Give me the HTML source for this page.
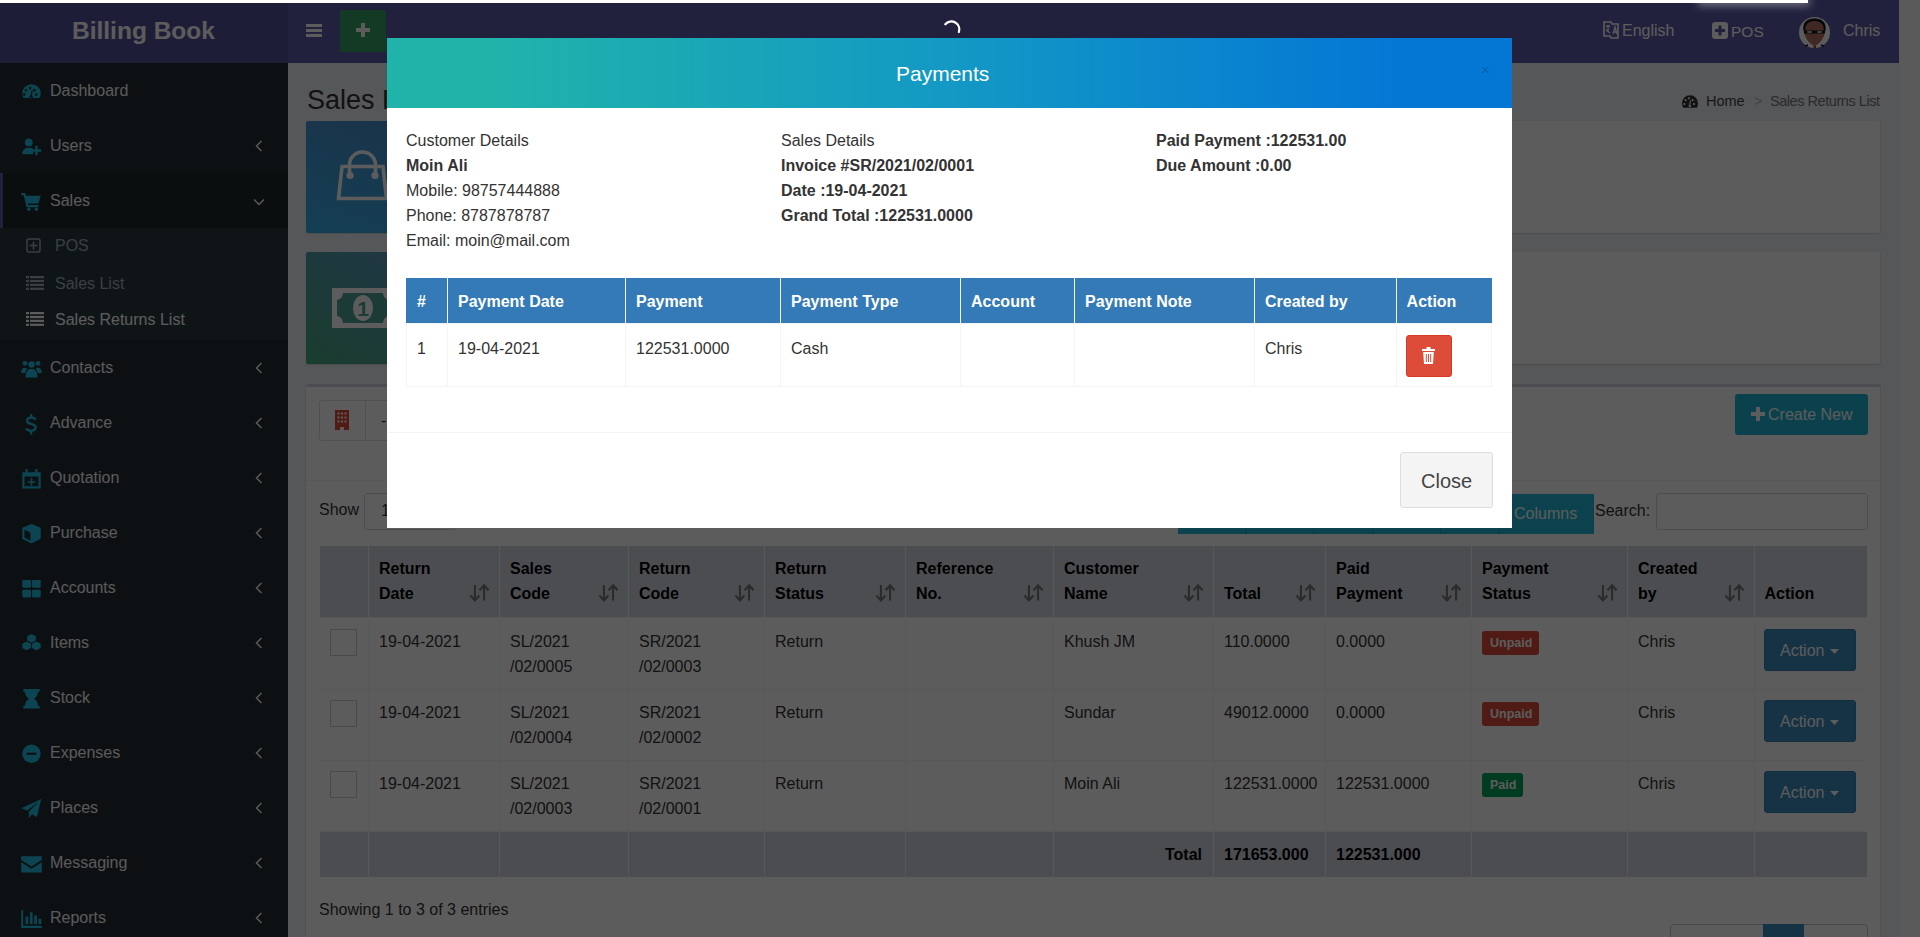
<!DOCTYPE html>
<html><head><meta charset="utf-8">
<style>
*{box-sizing:border-box;margin:0;padding:0}
html,body{width:1920px;height:937px;overflow:hidden;font-family:"Liberation Sans",sans-serif;background:#ecf0f5;position:relative}
.a{position:absolute}
.t{white-space:nowrap}
svg.a{overflow:visible}
</style></head><body>
<div class="a" style="left:288px;top:62px;width:1611px;height:875px;background:#ecf0f5;"></div>
<div class="a" style="left:0px;top:0px;width:288px;height:62.5px;background:#555299;"></div>
<div class="a" style="left:288px;top:0px;width:1611px;height:62.5px;background:#605ca8;"></div>
<span class="a t" style="left:72px;top:19.26px;font-size:24.5px;line-height:24.5px;color:#fff;font-weight:700;">Billing Book</span>
<div class="a" style="left:306px;top:24px;width:16px;height:3px;background:#fff;"></div>
<div class="a" style="left:306px;top:29px;width:16px;height:3px;background:#fff;"></div>
<div class="a" style="left:306px;top:34px;width:16px;height:3px;background:#fff;"></div>
<div class="a" style="left:340px;top:10px;width:46px;height:42px;background:#34a068;border-radius:3px"></div>
<div class="a" style="left:356px;top:27.5px;width:14px;height:4px;background:#fff;"></div>
<div class="a" style="left:361px;top:23px;width:4px;height:14px;background:#fff;"></div>
<svg class="a" style="left:1603px;top:21px;width:16px;height:19px;" viewBox="0 0 16 19"><path d="M1 1h7l1 2h6v14H8l-1-2H1z" fill="none" stroke="#fff" stroke-width="1.6"/><path d="M3 5h4M5 5v6M3 9l4 3" stroke="#fff" stroke-width="1.3" fill="none"/><path d="M10 13l2-7 2 7M10.7 11h2.6" stroke="#fff" stroke-width="1.3" fill="none"/></svg>
<span class="a t" style="left:1622px;top:23.46px;font-size:16px;line-height:16px;color:#fff;font-weight:400;">English</span>
<svg class="a" style="left:1712px;top:22px;width:16px;height:17px;" viewBox="0 0 16 17"><rect x="0" y="0" width="16" height="17" rx="3" fill="#fff"/><path d="M6.5 3.5h3v3.5H13v3h-3.5v3.5h-3V10H3V7h3.5z" fill="#605ca8"/></svg>
<span class="a t" style="left:1731px;top:23.88px;font-size:15.5px;line-height:15.5px;color:#fff;font-weight:400;">POS</span>
<svg class="a" style="left:1799px;top:17px;width:31px;height:31px;" viewBox="0 0 31 31"><circle cx="15.5" cy="15.5" r="15.5" fill="#fff"/><path d="M15.5 1.5c6.5 0 10.5 4 10.5 11 0 8-5 14.5-10.5 16.5C10 27 5 20.5 5 12.5c0-7 4-11 10.5-11z" fill="#b87068"/><path d="M4.5 14c-1.5-9 4-12.5 11-12.5S28 5 26.5 14l-1.8-.5c.3-6-3-9.5-9.2-9.5S6 7.5 6.3 13.5z" fill="#111"/><path d="M5 13.5h21v3H5z" fill="#111"/><rect x="8" y="14" width="5" height="2" rx="1" fill="#bbb"/><rect x="18" y="14" width="5" height="2" rx="1" fill="#bbb"/><path d="M9 28l-3 1M22 28l3 1" stroke="#111" stroke-width="1.5"/><rect x="14.5" y="28.5" width="2.5" height="2.5" fill="#c0392b"/></svg>
<span class="a t" style="left:1843px;top:23.46px;font-size:16px;line-height:16px;color:#fff;font-weight:400;">Chris</span>
<div class="a" style="left:0px;top:62.5px;width:288px;height:875px;background:#222d32;"></div>
<div class="a" style="left:0px;top:172.5px;width:288px;height:55px;background:#1e282c;"></div>
<div class="a" style="left:0px;top:172.5px;width:3px;height:55px;background:#605ca8;"></div>
<div class="a" style="left:0px;top:227.5px;width:288px;height:112px;background:#2c3b41;"></div>
<svg class="a" style="left:20.5px;top:81.5px;width:21px;height:19.5px;" viewBox="0 0 19 18"><g fill="#22c0e0"><path d="M9.5 2A8.5 8.5 0 0 0 1 10.5c0 1.6.4 3 1.2 4.3h14.6A8.4 8.4 0 0 0 18 10.5 8.5 8.5 0 0 0 9.5 2zM4 11.5a1.2 1.2 0 1 1 0-.1zm1.6-4a1.2 1.2 0 1 1 0-.1zm3.9-1.9a1.2 1.2 0 1 1 0-.1zM10.5 13a1.5 1.5 0 1 1-2-.6l1.2-5 .9.2-.6 5zm3-5.4a1.2 1.2 0 1 1 0-.1zm1.6 4a1.2 1.2 0 1 1 0-.1z"/></g></svg>
<span class="a t" style="left:50px;top:83.46px;font-size:16px;line-height:16px;color:#f8f8fa;font-weight:400;">Dashboard</span>
<svg class="a" style="left:20.5px;top:136.5px;width:21px;height:19.5px;" viewBox="0 0 19 18"><g fill="#22c0e0"><circle cx="7" cy="5" r="3.6"/><path d="M1 16c0-4 2-6 6-6 2 0 3 .5 4 1.2V16z"/><path d="M13 8h2.2v3.3h3.3v2.2h-3.3v3.3H13v-3.3H9.8v-2.2H13z"/></g></svg>
<span class="a t" style="left:50px;top:138.46px;font-size:16px;line-height:16px;color:#f8f8fa;font-weight:400;">Users</span>
<svg class="a" style="left:255px;top:140px;width:8px;height:12px;" viewBox="0 0 8 12"><path d="M6.5 1 1.5 6l5 5" fill="none" stroke="#f8f8fa" stroke-width="1.5"/></svg>
<svg class="a" style="left:20.5px;top:191.5px;width:21px;height:19.5px;" viewBox="0 0 19 18"><g fill="#22c0e0"><path d="M0 1h3.5l.8 2.5H18l-2 7H6l.5 1.5H16v2H5L2.3 3H0z"/><circle cx="7" cy="16" r="1.6"/><circle cx="14" cy="16" r="1.6"/></g></svg>
<span class="a t" style="left:50px;top:193.46px;font-size:16px;line-height:16px;color:#f8f8fa;font-weight:400;">Sales</span>
<svg class="a" style="left:253px;top:198px;width:12px;height:8px;" viewBox="0 0 12 8"><path d="M1 1.5l5 5 5-5" fill="none" stroke="#f8f8fa" stroke-width="1.5"/></svg>
<svg class="a" style="left:20.5px;top:358.5px;width:21px;height:19.5px;" viewBox="0 0 19 18"><g fill="#22c0e0"><circle cx="9.5" cy="5" r="3"/><circle cx="3.5" cy="4" r="2.2"/><circle cx="15.5" cy="4" r="2.2"/><path d="M4 17c0-5 2-8 5.5-8S15 12 15 17z"/><path d="M0 13c0-3 1-5 3.5-5 1 0 1.6.3 2 .7C4.5 10 4 11.5 3.8 13z"/><path d="M19 13c0-3-1-5-3.5-5-1 0-1.6.3-2 .7 1 1.3 1.5 2.8 1.7 4.3z"/></g></svg>
<span class="a t" style="left:50px;top:360.46px;font-size:16px;line-height:16px;color:#f8f8fa;font-weight:400;">Contacts</span>
<svg class="a" style="left:255px;top:362px;width:8px;height:12px;" viewBox="0 0 8 12"><path d="M6.5 1 1.5 6l5 5" fill="none" stroke="#f8f8fa" stroke-width="1.5"/></svg>
<svg class="a" style="left:20.5px;top:413.5px;width:21px;height:19.5px;" viewBox="0 0 19 18"><g fill="#22c0e0"><path d="M8.2 0h2v2.3c1.8.2 3.3 1 4 2.2l-1.8 1.2c-.6-.9-1.8-1.4-3.1-1.4-1.7 0-2.7.8-2.7 1.8 0 1.2 1 1.6 3.2 2.2 2.6.7 4.6 1.6 4.6 4.2 0 2.1-1.7 3.5-4.2 3.8V19h-2v-2.5c-2-.2-3.7-1.2-4.5-2.6l1.8-1.2c.7 1.1 2 1.7 3.6 1.7 1.8 0 3-.7 3-1.9 0-1.2-1-1.7-3.3-2.3C6.2 9.6 4.4 8.7 4.4 6.2c0-2 1.5-3.5 3.8-3.8z"/></g></svg>
<span class="a t" style="left:50px;top:415.46px;font-size:16px;line-height:16px;color:#f8f8fa;font-weight:400;">Advance</span>
<svg class="a" style="left:255px;top:417px;width:8px;height:12px;" viewBox="0 0 8 12"><path d="M6.5 1 1.5 6l5 5" fill="none" stroke="#f8f8fa" stroke-width="1.5"/></svg>
<svg class="a" style="left:20.5px;top:468.5px;width:21px;height:19.5px;" viewBox="0 0 19 18"><g fill="#22c0e0"><path d="M1 3h17v15H1zM3 7v9h13V7z" fill-rule="evenodd"/><rect x="4" y="0" width="2" height="5"/><rect x="13" y="0" width="2" height="5"/><path d="M8.7 8.5h1.6v2.7H13v1.6h-2.7v2.7H8.7v-2.7H6v-1.6h2.7z"/></g></svg>
<span class="a t" style="left:50px;top:470.46px;font-size:16px;line-height:16px;color:#f8f8fa;font-weight:400;">Quotation</span>
<svg class="a" style="left:255px;top:472px;width:8px;height:12px;" viewBox="0 0 8 12"><path d="M6.5 1 1.5 6l5 5" fill="none" stroke="#f8f8fa" stroke-width="1.5"/></svg>
<svg class="a" style="left:20.5px;top:523.5px;width:21px;height:19.5px;" viewBox="0 0 19 18"><g fill="#22c0e0"><path d="M9.5 0 18 3.5v10L9.5 18 1 13.5v-10zM3 5v7.5l5.5 3V8z"/></g></svg>
<span class="a t" style="left:50px;top:525.46px;font-size:16px;line-height:16px;color:#f8f8fa;font-weight:400;">Purchase</span>
<svg class="a" style="left:255px;top:527px;width:8px;height:12px;" viewBox="0 0 8 12"><path d="M6.5 1 1.5 6l5 5" fill="none" stroke="#f8f8fa" stroke-width="1.5"/></svg>
<svg class="a" style="left:20.5px;top:578.5px;width:21px;height:19.5px;" viewBox="0 0 19 18"><g fill="#22c0e0"><rect x="1" y="1" width="8" height="7" rx="1"/><rect x="10" y="1" width="8" height="7" rx="1"/><rect x="1" y="10" width="8" height="7" rx="1"/><rect x="10" y="10" width="8" height="7" rx="1"/></g></svg>
<span class="a t" style="left:50px;top:580.46px;font-size:16px;line-height:16px;color:#f8f8fa;font-weight:400;">Accounts</span>
<svg class="a" style="left:255px;top:582px;width:8px;height:12px;" viewBox="0 0 8 12"><path d="M6.5 1 1.5 6l5 5" fill="none" stroke="#f8f8fa" stroke-width="1.5"/></svg>
<svg class="a" style="left:20.5px;top:633.5px;width:21px;height:19.5px;" viewBox="0 0 19 18"><g fill="#22c0e0"><path d="M9.5 0l4 2v4l-4 2-4-2V2z"/><path d="M5 7l4 2v4l-4 2-4-2V9z"/><path d="M14 7l4 2v4l-4 2-4-2V9z"/></g></svg>
<span class="a t" style="left:50px;top:635.46px;font-size:16px;line-height:16px;color:#f8f8fa;font-weight:400;">Items</span>
<svg class="a" style="left:255px;top:637px;width:8px;height:12px;" viewBox="0 0 8 12"><path d="M6.5 1 1.5 6l5 5" fill="none" stroke="#f8f8fa" stroke-width="1.5"/></svg>
<svg class="a" style="left:20.5px;top:688.5px;width:21px;height:19.5px;" viewBox="0 0 19 18"><g fill="#22c0e0"><path d="M2 0h15v2.5h-1.5c0 3.5-2 5.5-3.8 6.5 1.8 1 3.8 3 3.8 6.5H17V18H2v-2.5h1.5c0-3.5 2-5.5 3.8-6.5-1.8-1-3.8-3-3.8-6.5H2z"/></g></svg>
<span class="a t" style="left:50px;top:690.46px;font-size:16px;line-height:16px;color:#f8f8fa;font-weight:400;">Stock</span>
<svg class="a" style="left:255px;top:692px;width:8px;height:12px;" viewBox="0 0 8 12"><path d="M6.5 1 1.5 6l5 5" fill="none" stroke="#f8f8fa" stroke-width="1.5"/></svg>
<svg class="a" style="left:20.5px;top:743.5px;width:21px;height:19.5px;" viewBox="0 0 19 18"><g fill="#22c0e0"><circle cx="9.5" cy="9" r="8.5"/><rect x="5" y="8" width="9" height="2" fill="#222d32"/></g></svg>
<span class="a t" style="left:50px;top:745.46px;font-size:16px;line-height:16px;color:#f8f8fa;font-weight:400;">Expenses</span>
<svg class="a" style="left:255px;top:747px;width:8px;height:12px;" viewBox="0 0 8 12"><path d="M6.5 1 1.5 6l5 5" fill="none" stroke="#f8f8fa" stroke-width="1.5"/></svg>
<svg class="a" style="left:20.5px;top:798.5px;width:21px;height:19.5px;" viewBox="0 0 19 18"><g fill="#22c0e0"><path d="M18.5 0 0 8.5l5.5 2.2L16 2.5 7 11.8v6L10 14l4.5 2.5z"/></g></svg>
<span class="a t" style="left:50px;top:800.46px;font-size:16px;line-height:16px;color:#f8f8fa;font-weight:400;">Places</span>
<svg class="a" style="left:255px;top:802px;width:8px;height:12px;" viewBox="0 0 8 12"><path d="M6.5 1 1.5 6l5 5" fill="none" stroke="#f8f8fa" stroke-width="1.5"/></svg>
<svg class="a" style="left:20.5px;top:853.5px;width:21px;height:19.5px;" viewBox="0 0 19 18"><g fill="#22c0e0"><path d="M0 2h19v3.5l-9.5 6L0 5.5z"/><path d="M0 7.5l9.5 6 9.5-6V17H0z"/></g></svg>
<span class="a t" style="left:50px;top:855.46px;font-size:16px;line-height:16px;color:#f8f8fa;font-weight:400;">Messaging</span>
<svg class="a" style="left:255px;top:857px;width:8px;height:12px;" viewBox="0 0 8 12"><path d="M6.5 1 1.5 6l5 5" fill="none" stroke="#f8f8fa" stroke-width="1.5"/></svg>
<svg class="a" style="left:20.5px;top:908.5px;width:21px;height:19.5px;" viewBox="0 0 19 18"><g fill="#22c0e0"><path d="M0 1h1.8v14.5H19v2H0z"/><rect x="4" y="7" width="2.5" height="7"/><rect x="8" y="3" width="2.5" height="11"/><rect x="12" y="6" width="2.5" height="8"/><rect x="16" y="9" width="2.5" height="5"/></g></svg>
<span class="a t" style="left:50px;top:910.46px;font-size:16px;line-height:16px;color:#f8f8fa;font-weight:400;">Reports</span>
<svg class="a" style="left:255px;top:912px;width:8px;height:12px;" viewBox="0 0 8 12"><path d="M6.5 1 1.5 6l5 5" fill="none" stroke="#f8f8fa" stroke-width="1.5"/></svg>
<svg class="a" style="left:26px;top:238px;width:15px;height:15px;" viewBox="0 0 15 15"><rect x="1" y="1" width="13" height="13" rx="2" fill="none" stroke="#9fb0b8" stroke-width="1.5"/><path d="M7.5 3.5v8M3.5 7.5h8" stroke="#9fb0b8" stroke-width="1.5"/></svg>
<span class="a t" style="left:55px;top:238.46px;font-size:16px;line-height:16px;color:#9fb0b8;font-weight:400;">POS</span>
<svg class="a" style="left:26px;top:276px;width:18px;height:14px;" viewBox="0 0 18 14"><rect x="0" y="0" width="3" height="2.2" fill="#9fb0b8"/><rect x="4" y="0" width="14" height="2.2" fill="#9fb0b8"/><rect x="0" y="3.9" width="3" height="2.2" fill="#9fb0b8"/><rect x="4" y="3.9" width="14" height="2.2" fill="#9fb0b8"/><rect x="0" y="7.8" width="3" height="2.2" fill="#9fb0b8"/><rect x="4" y="7.8" width="14" height="2.2" fill="#9fb0b8"/><rect x="0" y="11.7" width="3" height="2.2" fill="#9fb0b8"/><rect x="4" y="11.7" width="14" height="2.2" fill="#9fb0b8"/></svg>
<span class="a t" style="left:55px;top:276.46px;font-size:16px;line-height:16px;color:#9fb0b8;font-weight:400;">Sales List</span>
<svg class="a" style="left:26px;top:312px;width:18px;height:14px;" viewBox="0 0 18 14"><rect x="0" y="0" width="3" height="2.2" fill="#fff"/><rect x="4" y="0" width="14" height="2.2" fill="#fff"/><rect x="0" y="3.9" width="3" height="2.2" fill="#fff"/><rect x="4" y="3.9" width="14" height="2.2" fill="#fff"/><rect x="0" y="7.8" width="3" height="2.2" fill="#fff"/><rect x="4" y="7.8" width="14" height="2.2" fill="#fff"/><rect x="0" y="11.7" width="3" height="2.2" fill="#fff"/><rect x="4" y="11.7" width="14" height="2.2" fill="#fff"/></svg>
<span class="a t" style="left:55px;top:312.46px;font-size:16px;line-height:16px;color:#fff;font-weight:400;">Sales Returns List</span>
<span class="a t" style="left:307px;top:86.74px;font-size:27px;line-height:27px;color:#333;font-weight:400;">Sales Returns List</span>
<svg class="a" style="left:1682px;top:95px;width:16px;height:13px;" viewBox="0 0 19 15"><path fill="#333" d="M9.5 0A9.5 9.5 0 0 0 0 9.5c0 1.9.5 3.7 1.4 5.3h16.2A9.4 9.4 0 0 0 19 9.5 9.5 9.5 0 0 0 9.5 0zM4 10.5a1.3 1.3 0 1 1 0-.1zm1.6-4.6a1.3 1.3 0 1 1 0-.1zm3.9-2.2a1.3 1.3 0 1 1 0-.1zM10.7 12a1.6 1.6 0 1 1-2.2-.6l1.2-5.6 1 .2-.7 5.5zm3.3-6.1a1.3 1.3 0 1 1 0-.1zm1.6 4.6a1.3 1.3 0 1 1 0-.1z"/></svg>
<span class="a t" style="left:1706px;top:93.73px;font-size:14.5px;line-height:14.5px;color:#444;font-weight:400;">Home</span>
<span class="a t" style="left:1754px;top:93.73px;font-size:14.5px;line-height:14.5px;color:#bbb;font-weight:400;">&gt;</span>
<span class="a t" style="left:1770px;top:93.73px;font-size:14.5px;line-height:14.5px;color:#777;font-weight:400;letter-spacing:-0.45px">Sales Returns List</span>
<div class="a" style="left:306px;top:121px;width:1574px;height:112px;background:#fff;border-radius:2px;box-shadow:0 1px 1px rgba(0,0,0,.12),1px 0 0 rgba(0,0,0,.05)"></div>
<div class="a" style="left:306px;top:121px;width:112.5px;height:112px;background:linear-gradient(20deg,#38aee6,#4a8ccc);border-radius:2px 0 0 2px"></div>
<svg class="a" style="left:336px;top:150px;width:53px;height:52px;" viewBox="0 0 53 52"><path d="M13.5 25V15A13 13 0 0 1 39.5 15V25" fill="none" stroke="#fff" stroke-width="3.6"/><circle cx="14" cy="25.5" r="3.6" fill="#fff"/><circle cx="39" cy="25.5" r="3.6" fill="#fff"/><path d="M6 16.5H47L50.5 48.5H2.5Z" fill="none" stroke="#fff" stroke-width="3.6" stroke-linejoin="miter"/></svg>
<div class="a" style="left:306px;top:252px;width:1574px;height:112px;background:#fff;border-radius:2px;box-shadow:0 1px 1px rgba(0,0,0,.12),1px 0 0 rgba(0,0,0,.05)"></div>
<div class="a" style="left:306px;top:252px;width:112.5px;height:112px;background:linear-gradient(30deg,#4aa882,#50a0a0 50%,#5a98c0);border-radius:2px 0 0 2px"></div>
<svg class="a" style="left:332px;top:288px;width:62px;height:40px;" viewBox="0 0 62 40"><path d="M0 0h62v40H0z" fill="#fff"/><path d="M11 5h40a7 7 0 0 0 6 7v16a7 7 0 0 0-6 7H11a7 7 0 0 0-6-7V12a7 7 0 0 0 6-7z" fill="#4ea39a"/><ellipse cx="31" cy="20" rx="10" ry="13" fill="#fff"/><text x="31" y="28" font-family="Liberation Sans" font-weight="bold" font-size="21" fill="#4ea39a" text-anchor="middle">1</text></svg>
<div class="a" style="left:306px;top:384px;width:1574px;height:560px;background:#fff;border-top:3px solid #d2d6de;border-radius:3px;box-shadow:1px 0 0 rgba(0,0,0,.06),-1px 0 0 rgba(0,0,0,.06)"></div>
<div class="a" style="left:306px;top:480px;width:1574px;height:1px;background:#f4f4f4;"></div>
<div class="a" style="left:319px;top:400px;width:47px;height:41px;background:#fff;border:1px solid #ddd;border-radius:3px 0 0 3px"></div>
<svg class="a" style="left:335px;top:410px;width:14px;height:20px;" viewBox="0 0 14 20"><path d="M0 0h14v20H9v-3H5v3H0z" fill="#dd4b39"/><rect x="2.5" y="2.5" width="2" height="2" fill="#fff"/><rect x="2.5" y="6.5" width="2" height="2" fill="#fff"/><rect x="2.5" y="10.5" width="2" height="2" fill="#fff"/><rect x="6" y="2.5" width="2" height="2" fill="#fff"/><rect x="6" y="6.5" width="2" height="2" fill="#fff"/><rect x="6" y="10.5" width="2" height="2" fill="#fff"/><rect x="9.5" y="2.5" width="2" height="2" fill="#fff"/><rect x="9.5" y="6.5" width="2" height="2" fill="#fff"/><rect x="9.5" y="10.5" width="2" height="2" fill="#fff"/></svg>
<div class="a" style="left:365px;top:400px;width:60px;height:41px;background:#fff;border:1px solid #ddd;border-radius:0 3px 3px 0"></div>
<span class="a t" style="left:381px;top:413.46px;font-size:16px;line-height:16px;color:#333;font-weight:400;">-</span>
<div class="a" style="left:1735px;top:394px;width:133px;height:41px;background:#1cb5d3;border-radius:3px"></div>
<svg class="a" style="left:1751px;top:407px;width:14px;height:14px;" viewBox="0 0 14 14"><path d="M5 0h4v5h5v4H9v5H5V9H0V5h5z" fill="#fff"/></svg>
<span class="a t" style="left:1768px;top:407.46px;font-size:16px;line-height:16px;color:#fff;font-weight:400;">Create New</span>
<span class="a t" style="left:319px;top:502.06px;font-size:16px;line-height:16px;color:#333;font-weight:400;">Show</span>
<div class="a" style="left:363.5px;top:493px;width:92px;height:37px;background:#fff;border:1px solid #d2d6de;border-radius:3px"></div>
<span class="a t" style="left:381px;top:503.46px;font-size:16px;line-height:16px;color:#333;font-weight:400;">10</span>
<div class="a" style="left:1177.5px;top:494px;width:416px;height:40px;background:#1fb8d6;"></div>
<div class="a" style="left:1245px;top:494px;width:1px;height:40px;background:#1aa0bb;"></div>
<div class="a" style="left:1312.5px;top:494px;width:1px;height:40px;background:#1aa0bb;"></div>
<div class="a" style="left:1372px;top:494px;width:1px;height:40px;background:#1aa0bb;"></div>
<div class="a" style="left:1439.6px;top:494px;width:1px;height:40px;background:#1aa0bb;"></div>
<div class="a" style="left:1498.75px;top:494px;width:1px;height:40px;background:#1aa0bb;"></div>
<span class="a t" style="left:1514px;top:506.46px;font-size:16px;line-height:16px;color:#fff;font-weight:400;">Columns</span>
<span class="a t" style="left:1595px;top:502.96px;font-size:16px;line-height:16px;color:#333;font-weight:400;">Search:</span>
<div class="a" style="left:1656px;top:493px;width:211.5px;height:37px;background:#fff;border:1px solid #d2d6de;border-radius:3px"></div>
<div class="a" style="left:320px;top:545.5px;width:1547px;height:71.5px;background:#d2d6de;"></div>
<div class="a" style="left:320px;top:831px;width:1547px;height:46px;background:#d2d6de;"></div>
<div class="a" style="left:320px;top:617px;width:1547px;height:1px;background:#f4f4f4;"></div>
<div class="a" style="left:320px;top:689px;width:1547px;height:1px;background:#f4f4f4;"></div>
<div class="a" style="left:320px;top:760px;width:1547px;height:1px;background:#f4f4f4;"></div>
<div class="a" style="left:320px;top:831px;width:1547px;height:1px;background:#f4f4f4;"></div>
<div class="a" style="left:368px;top:545.5px;width:1px;height:331.5px;background:#f4f4f4;"></div>
<div class="a" style="left:499px;top:545.5px;width:1px;height:331.5px;background:#f4f4f4;"></div>
<div class="a" style="left:628px;top:545.5px;width:1px;height:331.5px;background:#f4f4f4;"></div>
<div class="a" style="left:764px;top:545.5px;width:1px;height:331.5px;background:#f4f4f4;"></div>
<div class="a" style="left:905px;top:545.5px;width:1px;height:331.5px;background:#f4f4f4;"></div>
<div class="a" style="left:1053px;top:545.5px;width:1px;height:331.5px;background:#f4f4f4;"></div>
<div class="a" style="left:1213px;top:545.5px;width:1px;height:331.5px;background:#f4f4f4;"></div>
<div class="a" style="left:1325px;top:545.5px;width:1px;height:331.5px;background:#f4f4f4;"></div>
<div class="a" style="left:1471px;top:545.5px;width:1px;height:331.5px;background:#f4f4f4;"></div>
<div class="a" style="left:1627px;top:545.5px;width:1px;height:331.5px;background:#f4f4f4;"></div>
<div class="a" style="left:1753.5px;top:545.5px;width:1px;height:331.5px;background:#f4f4f4;"></div>
<span class="a t" style="left:379px;top:561.46px;font-size:16px;line-height:16px;color:#000;font-weight:700;">Return</span>
<span class="a t" style="left:379px;top:586.46px;font-size:16px;line-height:16px;color:#000;font-weight:700;">Date</span>
<svg class="a" style="left:470px;top:584px;width:19px;height:18px;opacity:.75" viewBox="0 0 13.5 11.5"><path d="M3.5 0v10.5M0.3 7.5l3.2 3.5 3.2-3.5M10 11V0.5M6.8 3.8L10 .3l3.2 3.5" fill="none" stroke="#5a5a5a" stroke-width="1.5"/></svg>
<span class="a t" style="left:510px;top:561.46px;font-size:16px;line-height:16px;color:#000;font-weight:700;">Sales</span>
<span class="a t" style="left:510px;top:586.46px;font-size:16px;line-height:16px;color:#000;font-weight:700;">Code</span>
<svg class="a" style="left:599px;top:584px;width:19px;height:18px;opacity:.75" viewBox="0 0 13.5 11.5"><path d="M3.5 0v10.5M0.3 7.5l3.2 3.5 3.2-3.5M10 11V0.5M6.8 3.8L10 .3l3.2 3.5" fill="none" stroke="#5a5a5a" stroke-width="1.5"/></svg>
<span class="a t" style="left:639px;top:561.46px;font-size:16px;line-height:16px;color:#000;font-weight:700;">Return</span>
<span class="a t" style="left:639px;top:586.46px;font-size:16px;line-height:16px;color:#000;font-weight:700;">Code</span>
<svg class="a" style="left:735px;top:584px;width:19px;height:18px;opacity:.75" viewBox="0 0 13.5 11.5"><path d="M3.5 0v10.5M0.3 7.5l3.2 3.5 3.2-3.5M10 11V0.5M6.8 3.8L10 .3l3.2 3.5" fill="none" stroke="#5a5a5a" stroke-width="1.5"/></svg>
<span class="a t" style="left:775px;top:561.46px;font-size:16px;line-height:16px;color:#000;font-weight:700;">Return</span>
<span class="a t" style="left:775px;top:586.46px;font-size:16px;line-height:16px;color:#000;font-weight:700;">Status</span>
<svg class="a" style="left:876px;top:584px;width:19px;height:18px;opacity:.75" viewBox="0 0 13.5 11.5"><path d="M3.5 0v10.5M0.3 7.5l3.2 3.5 3.2-3.5M10 11V0.5M6.8 3.8L10 .3l3.2 3.5" fill="none" stroke="#5a5a5a" stroke-width="1.5"/></svg>
<span class="a t" style="left:916px;top:561.46px;font-size:16px;line-height:16px;color:#000;font-weight:700;">Reference</span>
<span class="a t" style="left:916px;top:586.46px;font-size:16px;line-height:16px;color:#000;font-weight:700;">No.</span>
<svg class="a" style="left:1024px;top:584px;width:19px;height:18px;opacity:.75" viewBox="0 0 13.5 11.5"><path d="M3.5 0v10.5M0.3 7.5l3.2 3.5 3.2-3.5M10 11V0.5M6.8 3.8L10 .3l3.2 3.5" fill="none" stroke="#5a5a5a" stroke-width="1.5"/></svg>
<span class="a t" style="left:1064px;top:561.46px;font-size:16px;line-height:16px;color:#000;font-weight:700;">Customer</span>
<span class="a t" style="left:1064px;top:586.46px;font-size:16px;line-height:16px;color:#000;font-weight:700;">Name</span>
<svg class="a" style="left:1184px;top:584px;width:19px;height:18px;opacity:.75" viewBox="0 0 13.5 11.5"><path d="M3.5 0v10.5M0.3 7.5l3.2 3.5 3.2-3.5M10 11V0.5M6.8 3.8L10 .3l3.2 3.5" fill="none" stroke="#5a5a5a" stroke-width="1.5"/></svg>
<span class="a t" style="left:1224px;top:586.46px;font-size:16px;line-height:16px;color:#000;font-weight:700;">Total</span>
<svg class="a" style="left:1296px;top:584px;width:19px;height:18px;opacity:.75" viewBox="0 0 13.5 11.5"><path d="M3.5 0v10.5M0.3 7.5l3.2 3.5 3.2-3.5M10 11V0.5M6.8 3.8L10 .3l3.2 3.5" fill="none" stroke="#5a5a5a" stroke-width="1.5"/></svg>
<span class="a t" style="left:1336px;top:561.46px;font-size:16px;line-height:16px;color:#000;font-weight:700;">Paid</span>
<span class="a t" style="left:1336px;top:586.46px;font-size:16px;line-height:16px;color:#000;font-weight:700;">Payment</span>
<svg class="a" style="left:1442px;top:584px;width:19px;height:18px;opacity:.75" viewBox="0 0 13.5 11.5"><path d="M3.5 0v10.5M0.3 7.5l3.2 3.5 3.2-3.5M10 11V0.5M6.8 3.8L10 .3l3.2 3.5" fill="none" stroke="#5a5a5a" stroke-width="1.5"/></svg>
<span class="a t" style="left:1482px;top:561.46px;font-size:16px;line-height:16px;color:#000;font-weight:700;">Payment</span>
<span class="a t" style="left:1482px;top:586.46px;font-size:16px;line-height:16px;color:#000;font-weight:700;">Status</span>
<svg class="a" style="left:1598px;top:584px;width:19px;height:18px;opacity:.75" viewBox="0 0 13.5 11.5"><path d="M3.5 0v10.5M0.3 7.5l3.2 3.5 3.2-3.5M10 11V0.5M6.8 3.8L10 .3l3.2 3.5" fill="none" stroke="#5a5a5a" stroke-width="1.5"/></svg>
<span class="a t" style="left:1638px;top:561.46px;font-size:16px;line-height:16px;color:#000;font-weight:700;">Created</span>
<span class="a t" style="left:1638px;top:586.46px;font-size:16px;line-height:16px;color:#000;font-weight:700;">by</span>
<svg class="a" style="left:1724.5px;top:584px;width:19px;height:18px;opacity:.75" viewBox="0 0 13.5 11.5"><path d="M3.5 0v10.5M0.3 7.5l3.2 3.5 3.2-3.5M10 11V0.5M6.8 3.8L10 .3l3.2 3.5" fill="none" stroke="#5a5a5a" stroke-width="1.5"/></svg>
<span class="a t" style="left:1764.5px;top:586.46px;font-size:16px;line-height:16px;color:#000;font-weight:700;">Action</span>
<div class="a" style="left:330px;top:629px;width:27px;height:27px;background:#fff;border:1.5px solid #c9ccd2"></div>
<span class="a t" style="left:379px;top:634.21px;font-size:16px;line-height:16px;color:#333;font-weight:400;">19-04-2021</span>
<span class="a t" style="left:510px;top:634.21px;font-size:16px;line-height:16px;color:#333;font-weight:400;">SL/2021</span>
<span class="a t" style="left:510px;top:659.21px;font-size:16px;line-height:16px;color:#333;font-weight:400;">/02/0005</span>
<span class="a t" style="left:639px;top:634.21px;font-size:16px;line-height:16px;color:#333;font-weight:400;">SR/2021</span>
<span class="a t" style="left:639px;top:659.21px;font-size:16px;line-height:16px;color:#333;font-weight:400;">/02/0003</span>
<span class="a t" style="left:775px;top:634.21px;font-size:16px;line-height:16px;color:#333;font-weight:400;">Return</span>
<span class="a t" style="left:1064px;top:634.21px;font-size:16px;line-height:16px;color:#333;font-weight:400;">Khush JM</span>
<span class="a t" style="left:1224px;top:634.21px;font-size:16px;line-height:16px;color:#333;font-weight:400;">110.0000</span>
<span class="a t" style="left:1336px;top:634.21px;font-size:16px;line-height:16px;color:#333;font-weight:400;">0.0000</span>
<div class="a" style="left:1482px;top:631px;width:57px;height:24px;background:#dd4b39;border-radius:3px"></div>
<span class="a t" style="left:1490px;top:637.42px;font-size:12.5px;line-height:12.5px;color:#fff;font-weight:700;">Unpaid</span>
<span class="a t" style="left:1638px;top:634.21px;font-size:16px;line-height:16px;color:#333;font-weight:400;">Chris</span>
<div class="a" style="left:1764px;top:629px;width:92px;height:42px;background:#3c8dbc;border-radius:3px;border:1px solid #367fa9"></div>
<span class="a t" style="left:1780px;top:643.46px;font-size:16px;line-height:16px;color:#fff;font-weight:400;">Action</span>
<svg class="a" style="left:1830px;top:649px;width:9px;height:5px;" viewBox="0 0 9 5"><path d="M0 0h9L4.5 5z" fill="#fff"/></svg>
<div class="a" style="left:330px;top:700px;width:27px;height:27px;background:#fff;border:1.5px solid #c9ccd2"></div>
<span class="a t" style="left:379px;top:705.21px;font-size:16px;line-height:16px;color:#333;font-weight:400;">19-04-2021</span>
<span class="a t" style="left:510px;top:705.21px;font-size:16px;line-height:16px;color:#333;font-weight:400;">SL/2021</span>
<span class="a t" style="left:510px;top:730.21px;font-size:16px;line-height:16px;color:#333;font-weight:400;">/02/0004</span>
<span class="a t" style="left:639px;top:705.21px;font-size:16px;line-height:16px;color:#333;font-weight:400;">SR/2021</span>
<span class="a t" style="left:639px;top:730.21px;font-size:16px;line-height:16px;color:#333;font-weight:400;">/02/0002</span>
<span class="a t" style="left:775px;top:705.21px;font-size:16px;line-height:16px;color:#333;font-weight:400;">Return</span>
<span class="a t" style="left:1064px;top:705.21px;font-size:16px;line-height:16px;color:#333;font-weight:400;">Sundar</span>
<span class="a t" style="left:1224px;top:705.21px;font-size:16px;line-height:16px;color:#333;font-weight:400;">49012.0000</span>
<span class="a t" style="left:1336px;top:705.21px;font-size:16px;line-height:16px;color:#333;font-weight:400;">0.0000</span>
<div class="a" style="left:1482px;top:702px;width:57px;height:24px;background:#dd4b39;border-radius:3px"></div>
<span class="a t" style="left:1490px;top:708.42px;font-size:12.5px;line-height:12.5px;color:#fff;font-weight:700;">Unpaid</span>
<span class="a t" style="left:1638px;top:705.21px;font-size:16px;line-height:16px;color:#333;font-weight:400;">Chris</span>
<div class="a" style="left:1764px;top:700px;width:92px;height:42px;background:#3c8dbc;border-radius:3px;border:1px solid #367fa9"></div>
<span class="a t" style="left:1780px;top:714.46px;font-size:16px;line-height:16px;color:#fff;font-weight:400;">Action</span>
<svg class="a" style="left:1830px;top:720px;width:9px;height:5px;" viewBox="0 0 9 5"><path d="M0 0h9L4.5 5z" fill="#fff"/></svg>
<div class="a" style="left:330px;top:771px;width:27px;height:27px;background:#fff;border:1.5px solid #c9ccd2"></div>
<span class="a t" style="left:379px;top:776.21px;font-size:16px;line-height:16px;color:#333;font-weight:400;">19-04-2021</span>
<span class="a t" style="left:510px;top:776.21px;font-size:16px;line-height:16px;color:#333;font-weight:400;">SL/2021</span>
<span class="a t" style="left:510px;top:801.21px;font-size:16px;line-height:16px;color:#333;font-weight:400;">/02/0003</span>
<span class="a t" style="left:639px;top:776.21px;font-size:16px;line-height:16px;color:#333;font-weight:400;">SR/2021</span>
<span class="a t" style="left:639px;top:801.21px;font-size:16px;line-height:16px;color:#333;font-weight:400;">/02/0001</span>
<span class="a t" style="left:775px;top:776.21px;font-size:16px;line-height:16px;color:#333;font-weight:400;">Return</span>
<span class="a t" style="left:1064px;top:776.21px;font-size:16px;line-height:16px;color:#333;font-weight:400;">Moin Ali</span>
<span class="a t" style="left:1224px;top:776.21px;font-size:16px;line-height:16px;color:#333;font-weight:400;">122531.0000</span>
<span class="a t" style="left:1336px;top:776.21px;font-size:16px;line-height:16px;color:#333;font-weight:400;">122531.0000</span>
<div class="a" style="left:1482px;top:773px;width:41px;height:24px;background:#00a65a;border-radius:3px"></div>
<span class="a t" style="left:1490px;top:779.42px;font-size:12.5px;line-height:12.5px;color:#fff;font-weight:700;">Paid</span>
<span class="a t" style="left:1638px;top:776.21px;font-size:16px;line-height:16px;color:#333;font-weight:400;">Chris</span>
<div class="a" style="left:1764px;top:771px;width:92px;height:42px;background:#3c8dbc;border-radius:3px;border:1px solid #367fa9"></div>
<span class="a t" style="left:1780px;top:785.46px;font-size:16px;line-height:16px;color:#fff;font-weight:400;">Action</span>
<svg class="a" style="left:1830px;top:791px;width:9px;height:5px;" viewBox="0 0 9 5"><path d="M0 0h9L4.5 5z" fill="#fff"/></svg>
<span class="a t" style="right:718px;top:846.96px;font-size:16px;line-height:16px;color:#000;font-weight:700;">Total</span>
<span class="a t" style="left:1224px;top:846.96px;font-size:16px;line-height:16px;color:#000;font-weight:700;">171653.000</span>
<span class="a t" style="left:1336px;top:846.96px;font-size:16px;line-height:16px;color:#000;font-weight:700;">122531.000</span>
<span class="a t" style="left:319px;top:901.96px;font-size:16px;line-height:16px;color:#333;font-weight:400;">Showing 1 to 3 of 3 entries</span>
<div class="a" style="left:1670px;top:924px;width:198px;height:40px;background:#fff;border:1px solid #c8c8d0;border-radius:4px"></div>
<div class="a" style="left:1763px;top:924px;width:41px;height:40px;background:#3c8dbc;"></div>
<div class="a" style="left:1899px;top:0px;width:21px;height:937px;background:#fafafa;"></div>
<div class="a" style="left:0px;top:0px;width:1920px;height:937px;background:rgba(0,0,0,0.64);"></div>
<div class="a" style="left:1700px;top:0px;width:108px;height:3px;background:#fff;box-shadow:0 0 8px 2px rgba(255,255,255,.45)"></div>
<div class="a" style="left:0px;top:0px;width:1808px;height:3px;background:#fff;"></div>
<svg class="a" style="left:942px;top:17.5px;width:20px;height:20px;" viewBox="0 0 20 20"><path d="M3.3 6.2A8 8 0 0 1 16.9 14" fill="none" stroke="#fff" stroke-width="2.3" stroke-linecap="round"/></svg>
<div class="a" style="left:387px;top:38px;width:1125px;height:490px;background:#fff;border-radius:0"></div>
<div class="a" style="left:387px;top:38px;width:1125px;height:70px;background:linear-gradient(90deg,#20b3aa 0%,#20b3aa 9%,#1399c4 50%,#0477d5 90%,#0477d5 100%);"></div>
<span class="a t" style="left:896px;top:63.22px;font-size:21px;line-height:21px;color:#fff;font-weight:400;">Payments</span>
<span class="a t" style="left:1481px;top:62.30px;font-size:15px;line-height:15px;color:rgba(0,0,0,.22);font-weight:400;">×</span>
<span class="a t" style="left:406px;top:133.46px;font-size:16px;line-height:16px;color:#333;font-weight:400;">Customer Details</span>
<span class="a t" style="left:406px;top:158.46px;font-size:16px;line-height:16px;color:#333;font-weight:700;">Moin Ali</span>
<span class="a t" style="left:406px;top:183.46px;font-size:16px;line-height:16px;color:#333;font-weight:400;">Mobile: 98757444888</span>
<span class="a t" style="left:406px;top:208.46px;font-size:16px;line-height:16px;color:#333;font-weight:400;">Phone: 8787878787</span>
<span class="a t" style="left:406px;top:233.46px;font-size:16px;line-height:16px;color:#333;font-weight:400;">Email: moin@mail.com</span>
<span class="a t" style="left:781px;top:133.46px;font-size:16px;line-height:16px;color:#333;font-weight:400;">Sales Details</span>
<span class="a t" style="left:781px;top:158.46px;font-size:16px;line-height:16px;color:#333;font-weight:700;">Invoice #SR/2021/02/0001</span>
<span class="a t" style="left:781px;top:183.46px;font-size:16px;line-height:16px;color:#333;font-weight:700;">Date :19-04-2021</span>
<span class="a t" style="left:781px;top:208.46px;font-size:16px;line-height:16px;color:#333;font-weight:700;">Grand Total :122531.0000</span>
<span class="a t" style="left:1156px;top:133.46px;font-size:16px;line-height:16px;color:#333;font-weight:700;">Paid Payment :122531.00</span>
<span class="a t" style="left:1156px;top:158.46px;font-size:16px;line-height:16px;color:#333;font-weight:700;">Due Amount :0.00</span>
<div class="a" style="left:406px;top:278px;width:1086px;height:45px;background:#337ab7;"></div>
<div class="a" style="left:406px;top:323px;width:1086px;height:64px;background:#fff;border:1px solid #f4f4f4"></div>
<div class="a" style="left:447px;top:278px;width:1px;height:45px;background:#f4f4f4;"></div>
<div class="a" style="left:447px;top:323px;width:1px;height:64px;background:#f4f4f4;"></div>
<div class="a" style="left:625px;top:278px;width:1px;height:45px;background:#f4f4f4;"></div>
<div class="a" style="left:625px;top:323px;width:1px;height:64px;background:#f4f4f4;"></div>
<div class="a" style="left:780px;top:278px;width:1px;height:45px;background:#f4f4f4;"></div>
<div class="a" style="left:780px;top:323px;width:1px;height:64px;background:#f4f4f4;"></div>
<div class="a" style="left:960px;top:278px;width:1px;height:45px;background:#f4f4f4;"></div>
<div class="a" style="left:960px;top:323px;width:1px;height:64px;background:#f4f4f4;"></div>
<div class="a" style="left:1074px;top:278px;width:1px;height:45px;background:#f4f4f4;"></div>
<div class="a" style="left:1074px;top:323px;width:1px;height:64px;background:#f4f4f4;"></div>
<div class="a" style="left:1254px;top:278px;width:1px;height:45px;background:#f4f4f4;"></div>
<div class="a" style="left:1254px;top:323px;width:1px;height:64px;background:#f4f4f4;"></div>
<div class="a" style="left:1395.6px;top:278px;width:1px;height:45px;background:#f4f4f4;"></div>
<div class="a" style="left:1395.6px;top:323px;width:1px;height:64px;background:#f4f4f4;"></div>
<span class="a t" style="left:417px;top:293.96px;font-size:16px;line-height:16px;color:#fff;font-weight:700;">#</span>
<span class="a t" style="left:458px;top:293.96px;font-size:16px;line-height:16px;color:#fff;font-weight:700;">Payment Date</span>
<span class="a t" style="left:636px;top:293.96px;font-size:16px;line-height:16px;color:#fff;font-weight:700;">Payment</span>
<span class="a t" style="left:791px;top:293.96px;font-size:16px;line-height:16px;color:#fff;font-weight:700;">Payment Type</span>
<span class="a t" style="left:971px;top:293.96px;font-size:16px;line-height:16px;color:#fff;font-weight:700;">Account</span>
<span class="a t" style="left:1085px;top:293.96px;font-size:16px;line-height:16px;color:#fff;font-weight:700;">Payment Note</span>
<span class="a t" style="left:1265px;top:293.96px;font-size:16px;line-height:16px;color:#fff;font-weight:700;">Created by</span>
<span class="a t" style="left:1406.6px;top:293.96px;font-size:16px;line-height:16px;color:#fff;font-weight:700;">Action</span>
<span class="a t" style="left:417px;top:341.46px;font-size:16px;line-height:16px;color:#333;font-weight:400;">1</span>
<span class="a t" style="left:458px;top:341.46px;font-size:16px;line-height:16px;color:#333;font-weight:400;">19-04-2021</span>
<span class="a t" style="left:636px;top:341.46px;font-size:16px;line-height:16px;color:#333;font-weight:400;">122531.0000</span>
<span class="a t" style="left:791px;top:341.46px;font-size:16px;line-height:16px;color:#333;font-weight:400;">Cash</span>
<span class="a t" style="left:1265px;top:341.46px;font-size:16px;line-height:16px;color:#333;font-weight:400;">Chris</span>
<div class="a" style="left:1406px;top:335px;width:46px;height:42px;background:#dd4b39;border-radius:3px;border:1px solid #d73925"></div>
<svg class="a" style="left:1422px;top:347px;width:13px;height:17px;" viewBox="0 0 13 17"><path d="M0 2h13v2H0zM4.5 0h4v2h-4zM1.2 5h10.6l-.8 12H2z" fill="#fff"/><path d="M4.3 7v8M6.5 7v8M8.7 7v8" stroke="#dd4b39" stroke-width="1"/></svg>
<div class="a" style="left:387px;top:432px;width:1125px;height:1px;background:#f4f4f4;"></div>
<div class="a" style="left:1400px;top:452px;width:93px;height:56px;background:#f4f4f4;border:1px solid #ddd;border-radius:3px"></div>
<span class="a t" style="left:1421px;top:471.07px;font-size:20px;line-height:20px;color:#444;font-weight:400;">Close</span>
</body></html>
